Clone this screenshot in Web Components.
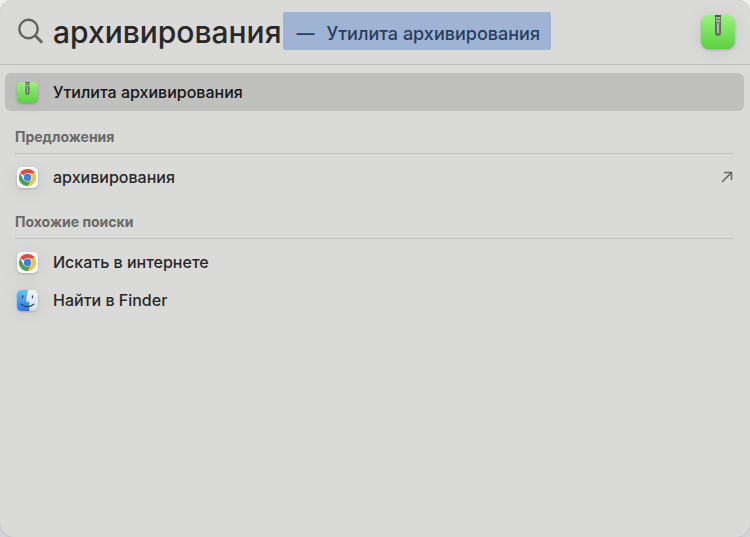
<!DOCTYPE html>
<html lang="ru">
<head>
<meta charset="utf-8">
<meta name="viewport" content="width=device-width, initial-scale=1">
<title>Spotlight</title>
<style>
  body {
    margin: 0;
    background: linear-gradient(#f0f0f0, #d4d4d8);
    font-family: Inter, "Liberation Sans", sans-serif;
    color: #282828;
    overflow: hidden;
  }
</style>
</head>
<body>
<spotlight-panel>
  <search-header slot="header" query="архивирования" completion="Утилита архивирования">
    <app-icon slot="icon" name="archive" size="34"></app-icon>
  </search-header>
  <result-row selected>
    <app-icon slot="icon" name="archive"></app-icon>
    Утилита архивирования
  </result-row>
  <result-section heading="Предложения">
    <result-row external>
      <app-icon slot="icon" name="chrome"></app-icon>
      архивирования
    </result-row>
  </result-section>
  <result-section heading="Похожие поиски">
    <result-row>
      <app-icon slot="icon" name="chrome"></app-icon>
      Искать в интернете
    </result-row>
    <result-row>
      <app-icon slot="icon" name="finder"></app-icon>
      Найти в Finder
    </result-row>
  </result-section>
</spotlight-panel>

<script>
const ICONS = {
  archive: `
    <svg viewBox="0 0 34 34">
      <defs><linearGradient id="g" x2="0" y2="1"><stop stop-color="#98f47c"/><stop offset="1" stop-color="#5bd03f"/></linearGradient></defs>
      <rect width="34" height="34" rx="8" fill="url(#g)"/>
      <path d="M14 0h6v18q0 3-3 3t-3-3z" fill="#6b7069"/>
      <path d="M14 0h6v2h-6z" fill="#565856"/>
      <path d="M15 3h4M15 6h4" stroke="#c3c6c3" stroke-width="1.4"/>
      <path d="M17 8v10" stroke="#b4b6b5" stroke-width="2"/>
      <path d="M14.500 8v10M19.500 8v10" stroke="#626567"/>
    </svg>`,
  chrome: `
    <svg viewBox="0 0 34 34">
      <rect width="34" height="34" rx="8" fill="#fbfbfb"/>
      <path d="M17 17 4.900 10A14 14 0 0 1 29.100 10z" fill="#d94f40"/>
      <path d="M17 10H29.100A14 14 0 0 1 17 31L23.100 20.500z" fill="#f3c242"/>
      <path d="M10.900 20.500 4.900 10A14 14 0 0 0 17 31L23.100 20.500z" fill="#4a9e55"/>
      <circle cx="17" cy="17" r="7" fill="#fff"/>
      <circle cx="17" cy="17" r="6" fill="#3f7de8"/>
    </svg>`,
  finder: `
    <svg viewBox="0 0 34 34">
      <defs>
        <linearGradient id="b" x2="0" y2="1"><stop stop-color="#5cc3f8"/><stop offset="1" stop-color="#3472ed"/></linearGradient>
        <linearGradient id="w" x2="0" y2="1"><stop stop-color="#f2f4f6"/><stop offset="1" stop-color="#d5dfe9"/></linearGradient>
      </defs>
      <rect width="34" height="34" rx="8" fill="url(#w)"/>
      <path d="M8 0H18Q15 9 15 19H20Q19 26 20 34H8Q0 34 0 26V8Q0 0 8 0z" fill="url(#b)"/>
      <path d="M9 9.500v3M25 9.500v3" stroke="#25435f" stroke-width="2" stroke-linecap="round"/>
      <path d="M7 23Q17 31 27 23" fill="none" stroke="#25435f" stroke-width="1.800" stroke-linecap="round"/>
    </svg>`,
};

class AppIcon extends HTMLElement {
  constructor() {
    super();
    this.shadow = this.attachShadow({ mode: "open" });
  }

  connectedCallback() {
    const size = this.getAttribute("size") || 21;
    this.shadow.innerHTML = `
      <style>
        :host {
          display: block;
          flex: none;
          width: ${size}px;
          height: ${size}px;
          filter: drop-shadow(0 1px 1px rgba(0, 0, 0, 0.2)) drop-shadow(0 2px 8px rgba(0, 0, 0, 0.08));
        }
        svg { display: block; width: 100%; height: 100%; }
      </style>
      ${ICONS[this.getAttribute("name")]}
    `;
  }
}

class SearchHeader extends HTMLElement {
  constructor() {
    super();
    this.shadow = this.attachShadow({ mode: "open" });
  }

  connectedCallback() {
    this.shadow.innerHTML = `
      <style>
        :host {
          display: flex;
          align-items: center;
          height: 64px;
          padding: 0 15px 0 17px;
          border-bottom: 1px solid #bebebc;
        }
        label { flex: none; display: flex; width: 36px; padding-bottom: 2px; }
        input {
          field-sizing: content;
          flex: none;
          height: 40px;
          padding: 0;
          border: 0;
          outline: 0;
          background: none;
          color: inherit;
          font: 500 30px/40px Inter, "Liberation Sans", sans-serif;
        }
        .completion {
          display: flex;
          gap: 12px;
          margin: 0 0 2px 1px;
          padding: 4px 11px 0 14px;
          height: 34px;
          border-radius: 2px;
          background: #9fb4d5;
          color: #293d5d;
          font-size: 18px;
          font-weight: 500;
          line-height: 36px;
          white-space: nowrap;
        }
        slot { display: block; margin-left: auto; }
      </style>
      <label for="query" aria-label="Поиск">
        <svg width="27" height="27" viewBox="0 0 27 27" fill="none" stroke="#636362" stroke-width="2.400" stroke-linecap="round">
          <circle cx="11.500" cy="11" r="9.200"/>
          <path d="M18.300 17.800 24.300 23.800" stroke-width="3"/>
        </svg>
      </label>
      <input id="query" type="text" value="${this.getAttribute("query")}" spellcheck="false" autocomplete="off">
      <div class="completion"><span>—</span><span>${this.getAttribute("completion")}</span></div>
      <slot name="icon"></slot>
    `;
  }
}

class ResultRow extends HTMLElement {
  constructor() {
    super();
    this.shadow = this.attachShadow({ mode: "open" });
  }

  connectedCallback() {
    const arrow = this.hasAttribute("external")
      ? `<svg width="12" height="12" viewBox="0 0 12 12" fill="none" stroke="#646463" stroke-width="1.500">
           <path d="M1 11 10.500 1.500M3 1.500H10.500V9"/>
         </svg>`
      : "";
    this.shadow.innerHTML = `
      <style>
        :host { display: block; margin: 0 6px 0 5px; }
        button {
          display: flex;
          align-items: center;
          gap: 15px;
          width: 100%;
          height: 38px;
          padding: 0 11px 0 12px;
          border: 0;
          border-radius: 6px;
          background: none;
          color: inherit;
          font: inherit;
          font-size: 16px;
          font-weight: 500;
          text-align: left;
        }
        :host([selected]) button { background: #c0c0be; color: #161616; }
        .label { flex: 1; }
      </style>
      <button type="button"><slot name="icon"></slot><span class="label"><slot></slot></span>${arrow}</button>
    `;
  }
}

class ResultSection extends HTMLElement {
  constructor() {
    super();
    this.shadow = this.attachShadow({ mode: "open" });
  }

  connectedCallback() {
    this.shadow.innerHTML = `
      <style>
        :host { display: block; }
        h2 {
          margin: 0 16px 4px 15px;
          padding: 16px 0 6px;
          border-bottom: 1px solid #bfbfbd;
          color: #686867;
          font-size: 14px;
          font-weight: 700;
          line-height: 20px;
        }
      </style>
      <h2>${this.getAttribute("heading")}</h2>
      <slot></slot>
    `;
  }
}

class SpotlightPanel extends HTMLElement {
  constructor() {
    super();
    this.shadow = this.attachShadow({ mode: "open" });
  }

  connectedCallback() {
    this.shadow.innerHTML = `
      <style>
        :host {
          display: block;
          box-sizing: border-box;
          min-height: 100vh;
          border-radius: 14px;
          background: #dadad8;
          box-shadow: 0 0 2px #a5a5a5;
        }
        main { padding: 8px 0; }
      </style>
      <slot name="header"></slot>
      <main><slot></slot></main>
    `;
  }
}

customElements.define("app-icon", AppIcon);
customElements.define("search-header", SearchHeader);
customElements.define("result-row", ResultRow);
customElements.define("result-section", ResultSection);
customElements.define("spotlight-panel", SpotlightPanel);
</script>
</body>
</html>
